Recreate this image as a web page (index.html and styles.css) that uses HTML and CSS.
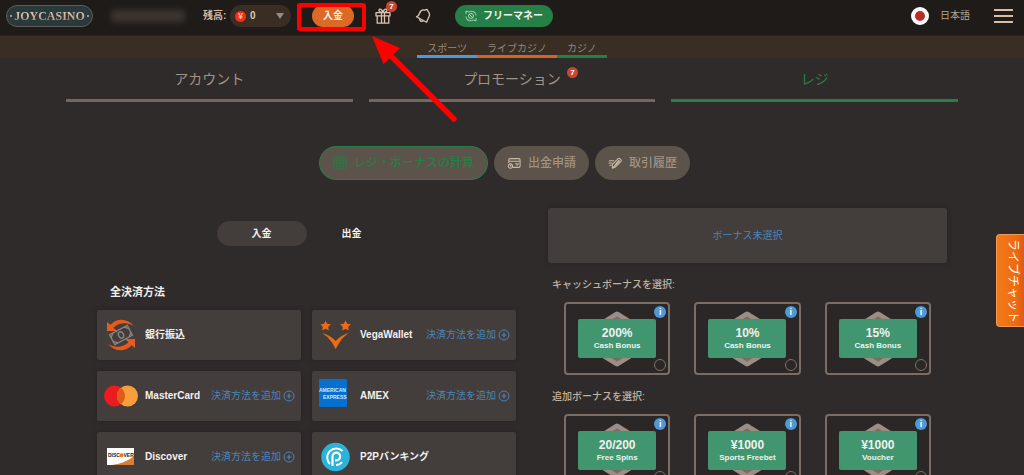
FILE: index.html
```html
<!DOCTYPE html>
<html lang="ja">
<head>
<meta charset="utf-8">
<meta name="viewport" content="width=device-width, initial-scale=1">
<title>JOYCASINO</title>
<link rel="stylesheet" href="styles.css">
</head>
<body>
<svg class="defs" aria-hidden="true">
  <symbol id="plus" viewBox="0 0 12 12"><circle cx="6" cy="6" r="5" fill="none" stroke="currentColor"/><path d="M6 3.600v4.800M3.600 6h4.800" stroke="currentColor" stroke-width="1.200"/></symbol>
  <symbol id="hexagon" viewBox="0 0 46 56"><path d="M21 1.200Q23 0 25 1.200L43 12.500Q45 13.800 45 16V40Q45 42.200 43 43.500L25 54.800Q23 56 21 54.800L3 43.500Q1 42.200 1 40V16Q1 13.800 3 12.500Z" fill="#9b8e84"/><path d="M23 5.500L40 16V40L23 50.500L6 40V16Z" fill="#776c65"/></symbol>
</svg>

<header class="topbar">
  <a class="logo" href="#"><span class="logo-text">JOYCASINO</span></a>
  <span class="username" aria-hidden="true"></span>
  <div class="balance">
    <span class="balance-label">残高:</span>
    <button class="balance-pill" type="button"><span class="coin">¥</span><span>0</span><svg class="caret" viewBox="0 0 8 6"><path d="M0 0h8L4 6z" fill="#978a7e"/></svg></button>
  </div>
  <button class="deposit" type="button">入金</button>
  <button class="icon-button gift" type="button" aria-label="ギフト">
    <svg viewBox="0 0 16 16" fill="none" stroke="#dcc7ae" stroke-width="1.300" stroke-linejoin="round"><path d="M1 4.700h14v3.200H1zM2.200 7.900h11.600v7.300H2.200zM6.500 4.700v10.500M9.500 4.700v10.500M7.800 4.500C5.500 4.500 3.600 3.500 4 2c.5-1.700 3.200-1 3.900 2.500C8.500 1 11.200.3 11.900 2c.5 1.500-1.600 2.500-4.100 2.500z"/></svg>
    <span class="count">7</span>
  </button>
  <button class="icon-button bell" type="button" aria-label="お知らせ">
    <svg viewBox="0 0 16 16" fill="none" stroke="#dcc7ae" stroke-width="1.300" stroke-linejoin="round" stroke-linecap="round"><path d="M1.500 8.800C3.300 8.400 4 7.200 4.600 5.200 5.400 2.800 7.500 1.500 9.900 2.200L12 1.300l1.200 2.200c1.500 1.500 1.600 3.600.7 5.500-1 2-1.500 3.500-2.300 5.200zM1.500 8.800l3.300 1.800M4.800 10.800c-.5 2 1.700 3.500 3.700 2"/></svg>
  </button>
  <button class="free-money" type="button">
    <svg viewBox="0 0 12 12" fill="none" stroke="#b5dcc5" stroke-width=".9"><circle cx="6" cy="6" r="2.500"/><path d="M1 4V1l2.500 1C6 .8 9 1.200 10.500 3M11 8v3l-2.500-1C6 11.200 3 10.800 1.500 9M1 6.500C1 8 2 9.500 3.500 10M11 5.500C11 4 10 2.500 8.500 2M4.500 4.500l3 3"/></svg>
    フリーマネー
  </button>
  <button class="language" type="button"><span class="flag"></span>日本語</button>
  <button class="menu" type="button" aria-label="メニュー"><span></span><span></span><span></span></button>
</header>

<nav class="sections">
  <a class="section sports" href="#">スポーツ</a>
  <a class="section live" href="#">ライブカジノ</a>
  <a class="section casino" href="#">カジノ</a>
</nav>

<nav class="tabs">
  <a class="tab" href="#">アカウント</a>
  <a class="tab" href="#"><span class="tab-label">プロモーション<span class="count">7</span></span></a>
  <a class="tab active" href="#">レジ</a>
</nav>

<div class="pills">
  <button class="pill active" type="button">
    <svg viewBox="0 0 16 16" fill="none" stroke="currentColor"><rect x="1" y="1" width="14" height="14" rx="1"/><path d="M1 5.500h14M3 3.300h10M4.500 7v8M8 7v8M11.500 7v8M3 8h10M3 11.500h10"/></svg>
    レジ・ボーナスの計算
  </button>
  <button class="pill" type="button">
    <svg viewBox="0 0 16 16" fill="none" stroke="#c9bba9" stroke-width="1.200"><path d="M2 8V4.500Q2 3 3.500 3h10Q15 3 15 4.500v7Q15 13 13.500 13H7M2 6h13"/><circle cx="4" cy="11.500" r="2.500"/><path d="M4 10v1.500h1.200"/><path d="M9.500 8.500h1.500l.8.800.8-.8h1M10 9l1.700 2L13 9" stroke-width="1"/></svg>
    出金申請
  </button>
  <button class="pill" type="button">
    <svg viewBox="0 0 16 16" fill="none" stroke="#c9bba9" stroke-width="1.200" stroke-linecap="round" stroke-linejoin="round"><path d="M5 9.500L11.300 3.200Q12.500 2 13.700 3.200L15 4.500Q15.500 5.500 14.700 6.300L8.500 12.500 5 14zM6.500 12.500l6-6M8 10.500l5-5M1.500 5.500h5M1 8h3.500M2 10.500h1.500M9 9L12.500 5M5.500 13.500l3-3"/></svg>
    取引履歴
  </button>
</div>

<main class="cashier">
  <section class="payments">
    <div class="switch">
      <button class="switch-item active" type="button">入金</button>
      <button class="switch-item" type="button">出金</button>
    </div>
    <h2 class="methods-title">全決済方法</h2>
    <div class="methods">
      <div class="method">
        <svg class="method-icon" viewBox="0 0 36 36"><g fill="#e8591c"><path d="M4 5v9h10l-3.500-3.200C16 5.500 24 5 31 9 24 .5 13 1 7.500 7.800z"/><path d="M32 31v-9H22l3.500 3.200C20 30.500 12 31 5 27c7 8.500 18 8 23.500 1.200z"/></g><g transform="rotate(-28 18 18)" fill="none" stroke="#8d8584" stroke-width="1.300"><rect x="8" y="12.500" width="20" height="11"/><ellipse cx="18" cy="18" rx="2.500" ry="3.300"/><path d="M8 16l3.500-3.500M8 20l3.500 3.500M28 16l-3.500-3.500M28 20l-3.500 3.500"/></g></svg>
        <span class="method-name">銀行振込</span>
      </div>
      <div class="method">
        <svg class="method-icon" viewBox="0 0 36 36" fill="#ed6b16"><path d="M7.500 3.500l1.700 3.300 3.600.5-2.600 2.600.6 3.600-3.300-1.700-3.300 1.700.6-3.600L2.600 7.300l3.600-.5z"/><path d="M27.500 3.500l1.700 3.300 3.600.5-2.600 2.600.6 3.600-3.300-1.700-3.300 1.700.6-3.600-2.600-2.600 3.600-.5z"/><path d="M4 16q8 2 13.700 8Q23 18 31 16q-6 3.500-9.500 9.500L17.700 32l-3.700-6.500Q10 19.500 4 16z"/></svg>
        <span class="method-name">VegaWallet</span>
        <a class="add" href="#">決済方法を追加<svg><use href="#plus"/></svg></a>
      </div>
      <div class="method">
        <svg class="method-icon" viewBox="0 0 36 36"><circle cx="11.500" cy="18" r="10.500" fill="#eb1b1f"/><circle cx="24.500" cy="18" r="10.500" fill="#f79e3d"/><path d="M18 9.800a10.500 10.500 0 0 1 0 16.400 10.500 10.500 0 0 1 0-16.400z" fill="#df5c16"/></svg>
        <span class="method-name">MasterCard</span>
        <a class="add" href="#">決済方法を追加<svg><use href="#plus"/></svg></a>
      </div>
      <div class="method">
        <svg class="method-icon" viewBox="0 0 36 36"><rect x="1" y="1" width="28" height="28" rx="1" fill="#0670cf"/><g class="amex-text"><text x="1" y="14">AMERICAN</text><text x="5" y="21">EXPRESS</text></g></svg>
        <span class="method-name">AMEX</span>
        <a class="add" href="#">決済方法を追加<svg><use href="#plus"/></svg></a>
      </div>
      <div class="method">
        <svg class="method-icon" viewBox="0 0 36 36"><rect x="4" y="9" width="27" height="17" fill="#fff"/><path d="M31 17v9H9q14-2 22-9z" fill="#dc7c35"/><circle cx="18.500" cy="16.200" r="2" fill="#ee7623"/><g class="discover-text"><text x="5" y="18">DISC</text><text x="20.500" y="18">VER</text></g></svg>
        <span class="method-name">Discover</span>
        <a class="add" href="#">決済方法を追加<svg><use href="#plus"/></svg></a>
      </div>
      <div class="method">
        <svg class="method-icon" viewBox="0 0 36 36"><circle cx="17.500" cy="18" r="14.300" fill="#2bb3dc"/><g fill="none" stroke="#fff" stroke-width="2"><path d="M24.500 12A9 9 0 1 0 12 25"/><path d="M14.500 27V17.500a3.800 3.800 0 1 1 3.800 3.800h-1.300" stroke-width="2.200"/><path d="M18 26q4 0 6-3"/></g></svg>
        <span class="method-name">P2Pバンキング</span>
      </div>
    </div>
  </section>

  <section class="bonuses">
    <button class="no-bonus" type="button">ボーナス未選択</button>
    <h3 class="bonus-title">キャッシュボーナスを選択:</h3>
    <div class="bonus-row">
      <div class="bonus"><svg class="hexagon"><use href="#hexagon"/></svg><label class="bonus-label" for="cash-200"><strong>200%</strong>Cash Bonus</label><button class="info" type="button" aria-label="情報">i</button><input class="pick" type="radio" name="cash" id="cash-200"></div>
      <div class="bonus"><svg class="hexagon"><use href="#hexagon"/></svg><label class="bonus-label" for="cash-10"><strong>10%</strong>Cash Bonus</label><button class="info" type="button" aria-label="情報">i</button><input class="pick" type="radio" name="cash" id="cash-10"></div>
      <div class="bonus"><svg class="hexagon"><use href="#hexagon"/></svg><label class="bonus-label" for="cash-15"><strong>15%</strong>Cash Bonus</label><button class="info" type="button" aria-label="情報">i</button><input class="pick" type="radio" name="cash" id="cash-15"></div>
    </div>
    <h3 class="bonus-title">追加ボーナスを選択:</h3>
    <div class="bonus-row">
      <div class="bonus"><svg class="hexagon"><use href="#hexagon"/></svg><label class="bonus-label" for="extra-spins"><strong>20/200</strong>Free Spins</label><button class="info" type="button" aria-label="情報">i</button><input class="pick" type="radio" name="extra" id="extra-spins"></div>
      <div class="bonus"><svg class="hexagon"><use href="#hexagon"/></svg><label class="bonus-label" for="extra-sports"><strong>¥1000</strong>Sports Freebet</label><button class="info" type="button" aria-label="情報">i</button><input class="pick" type="radio" name="extra" id="extra-sports"></div>
      <div class="bonus"><svg class="hexagon"><use href="#hexagon"/></svg><label class="bonus-label" for="extra-voucher"><strong>¥1000</strong>Voucher</label><button class="info" type="button" aria-label="情報">i</button><input class="pick" type="radio" name="extra" id="extra-voucher"></div>
    </div>
  </section>
</main>

<button class="chat" type="button">ライブチャット</button>

<svg class="pointer" viewBox="0 0 164 124" aria-hidden="true"><rect x="2" y="2" width="65" height="24" rx="1" fill="none" stroke="#f00" stroke-width="4"/><path d="M75 33l28 12-16.500 16z" fill="#f00"/><path d="M92 51l65 65" stroke="#f00" stroke-width="5.500" stroke-linecap="round"/></svg>
</body>
</html>
```

FILE: styles.css
```css
* {
  box-sizing: border-box;
}

body {
  margin: 0;
  position: relative;
  height: 100vh;
  overflow: hidden;
  background: #2f2b2a;
  color: #f2f0ee;
  font: 10px/16px "Liberation Sans", "Noto Sans CJK JP", sans-serif;
}

button {
  margin: 0;
  padding: 0;
  border: 0;
  background: none;
  color: inherit;
  font: inherit;
  cursor: pointer;
}

a {
  color: inherit;
  text-decoration: none;
}

h2,
h3 {
  margin: 0;
  font-size: inherit;
}

.defs {
  position: absolute;
  width: 0;
  height: 0;
}

.topbar {
  display: flex;
  align-items: center;
  padding: 5px 11px 8px 6px;
  background: #1f1b18;
  border-bottom: 1px solid #2b241d;
}

.logo {
  display: flex;
  align-items: center;
  justify-content: space-between;
  width: 87px;
  height: 22px;
  padding: 0 3px;
  border: 1px solid #5d5c57;
  border-radius: 11px;
  background: #2a3a3c;
}

.logo::before,
.logo::after {
  content: "";
  width: 2px;
  height: 2px;
  border-radius: 50%;
  background: #c9b7a2;
}

.logo-text {
  font: 12px/20px "Liberation Serif", serif;
  font-weight: bold;
  background: linear-gradient(#e8d9c8 20%, #b98a67 80%);
  background-clip: text;
  color: transparent;
}

.username {
  width: 74px;
  height: 12px;
  margin-left: 18px;
  border-radius: 4px;
  background: #3c3632;
  filter: blur(3px);
}

.balance {
  display: flex;
  align-items: center;
  gap: 4px;
  margin-left: 18px;
}

.balance-label {
  width: 23px;
  white-space: nowrap;
  color: #cfbda8;
  font-weight: bold;
}

.balance-pill {
  display: flex;
  align-items: center;
  gap: 4px;
  width: 61px;
  height: 22px;
  padding: 0 7px 0 5px;
  border-radius: 11px;
  background: #392d24;
  color: #dccab5;
  font-weight: bold;
}

.coin {
  width: 11px;
  height: 11px;
  border-radius: 50%;
  background: #f42f12;
  color: #f6c9a8;
  font-size: 9px;
  line-height: 11px;
}

.caret {
  width: 8px;
  height: 6px;
  margin-left: auto;
}

.deposit {
  width: 42px;
  height: 22px;
  margin-left: 21px;
  border-radius: 11px;
  background: #dc6a26;
  font-weight: bold;
}

.icon-button {
  position: relative;
  height: 16px;
  width: 16px;
}

.icon-button svg {
  display: block;
  width: 16px;
  height: 16px;
}

.gift {
  margin-left: 21px;
}

.bell {
  margin-left: 24px;
}

.count {
  position: absolute;
  width: 11px;
  height: 11px;
  border-radius: 50%;
  background: #cb4630;
  color: #fff;
  font-size: 8px;
  font-weight: bold;
  line-height: 11px;
  text-align: center;
}

.gift .count {
  top: -7px;
  right: -6px;
}

.free-money {
  display: flex;
  align-items: center;
  justify-content: center;
  gap: 6px;
  width: 98px;
  height: 22px;
  margin-left: 24px;
  border-radius: 11px;
  background: #267f46;
  font-weight: bold;
}

.free-money svg {
  width: 12px;
  height: 12px;
}

.language {
  display: flex;
  align-items: center;
  gap: 11px;
  margin-left: auto;
  color: #b5a594;
}

.flag {
  width: 18px;
  height: 18px;
  border: 4px solid #fff;
  border-radius: 50%;
  background: #b92d29;
}

.menu {
  display: grid;
  gap: 4px;
  width: 19px;
  margin-left: 24px;
}

.menu span {
  height: 2px;
  background: #d8bfa4;
}

.sections {
  display: flex;
  justify-content: center;
  background: #392d24;
}

.section {
  padding: 6px 10px 0;
  border-bottom: 3px solid;
  color: #94887c;
  line-height: 13px;
}

.sports {
  border-color: #5098da;
}

.live {
  border-color: #d2642a;
}

.casino {
  border-color: #267f46;
}

.tabs {
  display: grid;
  grid-template-columns: repeat(3, 1fr);
  gap: 16px;
  padding: 0 66px;
}

.tab {
  padding: 10px 0 9px;
  border-bottom: 3px solid #73675f;
  color: #a19486;
  font-size: 14px;
  line-height: 22px;
  text-align: center;
}

.tab.active {
  border-color: #267f46;
  color: #267f46;
}

.tab-label {
  position: relative;
}

.tab-label .count {
  top: -4px;
  right: -17px;
}

.pills {
  display: flex;
  justify-content: center;
  gap: 6px;
  padding: 44px 15px 28px 0;
}

.pill {
  display: flex;
  align-items: center;
  gap: 7px;
  height: 34px;
  padding: 0 13px;
  border-radius: 17px;
  background: #5c534a;
  color: #a29283;
  font-size: 12px;
  font-weight: 500;
}

.pill svg {
  width: 14px;
  height: 14px;
}

.pill.active {
  border: 1px solid #267f46;
  color: #267f46;
}

.cashier {
  display: grid;
  grid-template-columns: 419fr 399fr;
  gap: 32px;
  padding: 0 77px 20px 97px;
}

.switch {
  display: flex;
  justify-content: center;
  padding-top: 13px;
}

.switch-item {
  width: 90px;
  height: 25px;
  border-radius: 13px;
  font-weight: bold;
}

.switch-item.active {
  background: #433d3c;
}

.methods-title {
  padding: 38px 13px 10px;
  font-size: 11px;
}

.methods {
  display: grid;
  grid-template-columns: 1fr 1fr;
  gap: 11px;
}

.method {
  display: flex;
  align-items: center;
  height: 50px;
  padding: 0 6px;
  border-radius: 2px;
  background: #433d3c;
  box-shadow: 0 0 4px #272322;
}

.method-icon {
  width: 36px;
  height: 36px;
  margin-right: 6px;
}

.method-name {
  font-weight: bold;
}

.add {
  display: flex;
  align-items: center;
  gap: 2px;
  margin-left: auto;
  color: #4b84b8;
}

.add svg {
  width: 12px;
  height: 12px;
}

.amex-text {
  fill: #d5e7fa;
  font-size: 5px;
  font-weight: bold;
}

.discover-text {
  fill: #222;
  font-size: 5px;
  font-weight: bold;
}

.no-bonus {
  display: block;
  width: 100%;
  height: 55px;
  border-radius: 3px;
  background: #433d3c;
  box-shadow: 0 0 4px #272322;
  color: #4b84b8;
}

.bonus-title {
  padding: 14px 4px 9px;
  color: #c0b1a0;
  font-weight: 500;
}

.bonus-row {
  display: grid;
  grid-template-columns: repeat(3, 1fr);
  gap: 24px;
  padding: 0 16px;
}

.bonus {
  position: relative;
  display: grid;
  place-items: center;
  height: 73px;
  border: 2px solid #7a6d64;
  border-radius: 4px;
  background: #2b2726;
}

.hexagon {
  width: 46px;
  height: 56px;
  grid-area: 1 / 1;
}

.bonus-label {
  position: relative;
  grid-area: 1 / 1;
  display: grid;
  align-content: center;
  width: 78px;
  height: 39px;
  border-radius: 2px;
  background: #419670;
  font-size: 8px;
  font-weight: bold;
  line-height: 11px;
  text-align: center;
}

.bonus-label strong {
  font-size: 12px;
  line-height: 13px;
}

.info {
  position: absolute;
  top: 2px;
  right: 2px;
  width: 12px;
  height: 12px;
  border-radius: 50%;
  background: #5098da;
  color: #fff;
  font-size: 9px;
  font-weight: bold;
  line-height: 12px;
}

.pick {
  position: absolute;
  right: 2px;
  bottom: 2px;
  width: 12px;
  height: 12px;
  margin: 0;
  appearance: none;
  border: 1px solid #7d7169;
  border-radius: 50%;
}

.chat {
  position: absolute;
  top: 234px;
  right: 0;
  width: 28px;
  height: 93px;
  padding-left: 4px;
  border: 1px solid #f29a52;
  border-right: 0;
  border-radius: 4px 0 0 4px;
  background: linear-gradient(90deg, #f27a1c, #ef6c0e 70%, #d95a1c);
  color: #fff;
  font-size: 12px;
  writing-mode: vertical-rl;
  text-orientation: sideways;
}

.pointer {
  position: absolute;
  top: 3px;
  left: 297px;
  width: 164px;
  height: 124px;
  pointer-events: none;
}
```
